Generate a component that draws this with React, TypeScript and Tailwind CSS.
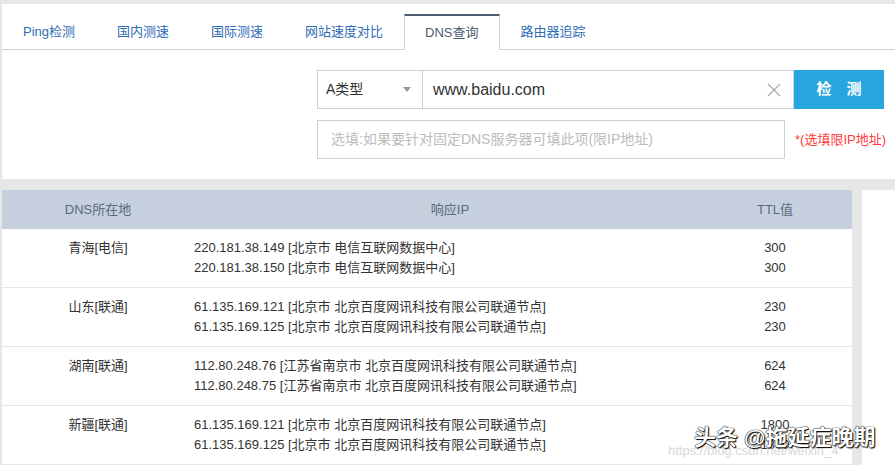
import React from "react";

const FONT = { fontFamily: '"Liberation Sans", "Noto Sans CJK SC", sans-serif' };

const tabs = ["Ping检测", "国内测速", "国际测速", "网站速度对比", "DNS查询", "路由器追踪"];

const rows = [
  {
    loc: "青海[电信]",
    items: [
      ["220.181.38.149 [北京市 电信互联网数据中心]", "300"],
      ["220.181.38.150 [北京市 电信互联网数据中心]", "300"],
    ],
  },
  {
    loc: "山东[联通]",
    items: [
      ["61.135.169.121 [北京市 北京百度网讯科技有限公司联通节点]", "230"],
      ["61.135.169.125 [北京市 北京百度网讯科技有限公司联通节点]", "230"],
    ],
  },
  {
    loc: "湖南[联通]",
    items: [
      ["112.80.248.76 [江苏省南京市 北京百度网讯科技有限公司联通节点]", "624"],
      ["112.80.248.75 [江苏省南京市 北京百度网讯科技有限公司联通节点]", "624"],
    ],
  },
  {
    loc: "新疆[联通]",
    items: [
      ["61.135.169.121 [北京市 北京百度网讯科技有限公司联通节点]", "1800"],
      ["61.135.169.125 [北京市 北京百度网讯科技有限公司联通节点]", "1800"],
    ],
  },
];

export default function App() {
  return (
    <div
      className="relative w-[895px] h-[465px] overflow-hidden bg-[#e7e7e7] pt-[4px] pl-[2px]"
      style={FONT}
    >
      {/* Top panel */}
      <div className="bg-white h-[175px]">
        <div className="pt-[10px] flex border-b border-[#c9d1dc]">
          {tabs.map((t, i) =>
            i === 4 ? (
              <div
                key={t}
                className="relative z-10 -mb-px h-[36px] px-[20px] flex items-center bg-white border-t-2 border-t-[#4e5d71] border-x border-x-[#c9d1dc] text-[13px] text-[#4e5c70]"
              >
                {t}
              </div>
            ) : (
              <div
                key={t}
                className="h-[35px] px-[21px] flex items-center text-[13px] text-[#2f6db5]"
              >
                {t}
              </div>
            )
          )}
        </div>

        <div className="pl-[315px] pt-[20px]">
          <div className="flex h-[39px]">
            <div className="w-[106px] border border-[#c9d1dc] flex items-center justify-between pl-[8px] pr-[11px]">
              <span className="text-[14px] text-[#333]">A类型</span>
              <span className="w-0 h-0 border-x-[4px] border-x-transparent border-t-[5px] border-t-[#999]" />
            </div>
            <div className="w-[371px] border-y border-r border-[#c9d1dc] flex items-center justify-between pl-[10px] pr-[12px]">
              <span className="text-[16px] text-[#333]">www.baidu.com</span>
              <svg width="14" height="14" viewBox="0 0 14 14">
                <path d="M1 1 L13 13 M13 1 L1 13" stroke="#a9a9a9" strokeWidth="1.2" fill="none" />
              </svg>
            </div>
            <div className="w-[90px] bg-[#27a6de] flex items-center justify-center gap-[15px] text-white text-[15px] font-bold">
              <span>检</span>
              <span>测</span>
            </div>
          </div>
          <div className="flex items-center mt-[11px]">
            <div className="w-[468px] h-[39px] border border-[#c9d1dc] flex items-center pl-[13px] text-[14px] text-[#bcbcbc]">
              选填:如果要针对固定DNS服务器可填此项(限IP地址)
            </div>
            <div className="ml-[10px] text-[13px] text-[#ff3b3b]">*(选填限IP地址)</div>
          </div>
        </div>
      </div>

      {/* Table area */}
      <div className="flex gap-[10px] mt-[11px] h-[290px]">
        <div className="w-[850px] bg-white">
          <div className="grid grid-cols-[192px_1fr_154px] h-[39px] bg-[#c6cfdd] items-center text-[13px] text-[#5a6a81]">
            <div className="text-center">DNS所在地</div>
            <div className="text-center pl-[8px]">响应IP</div>
            <div className="text-center">TTL值</div>
          </div>
          {rows.map((r) => (
            <div
              key={r.loc}
              className="grid grid-cols-[192px_1fr_154px] border-b border-[#e6e6e6] py-[9px] text-[13px] leading-[20px] text-[#333]"
            >
              <div className="text-center">{r.loc}</div>
              <div>
                {r.items.map((it) => (
                  <div key={it[0]}>{it[0]}</div>
                ))}
              </div>
              <div className="text-center">
                {r.items.map((it, j) => (
                  <div key={j}>{it[1]}</div>
                ))}
              </div>
            </div>
          ))}
        </div>
        <div className="flex-1 bg-white" />
      </div>

      {/* Watermark */}
      <div className="absolute left-[668px] top-[441px] text-[13px] text-[#d8d8d8] whitespace-nowrap">
        https://blog.csdn.net/weixin_4
      </div>
      <div
        className="absolute left-[694px] top-[424px] text-[22px] font-bold text-white whitespace-nowrap leading-[28px] [text-shadow:0_0_1px_#000,0_0_1px_#000,1px_1px_1px_#000]"
      >
        头条 @拖延症晚期
      </div>
    </div>
  );
}
